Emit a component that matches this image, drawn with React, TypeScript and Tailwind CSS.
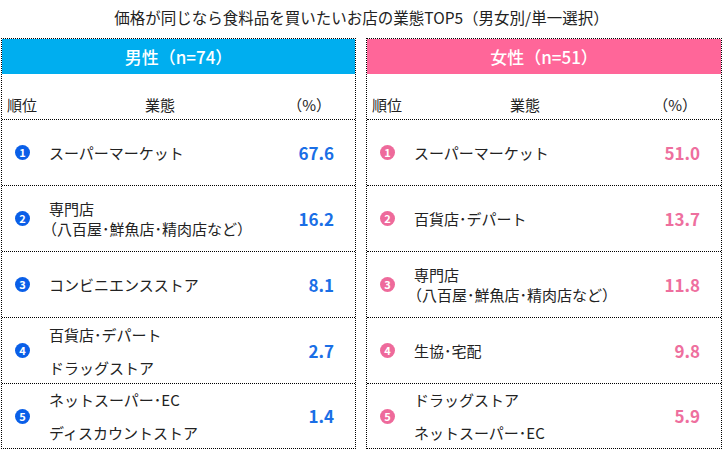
import React from "react";

type Item = { name: string[]; value: string; tight?: boolean };

const male: Item[] = [
  { name: ["スーパーマーケット"], value: "67.6" },
  { name: ["専門店", "（八百屋･鮮魚店･精肉店など）"], value: "16.2", tight: true },
  { name: ["コンビニエンスストア"], value: "8.1" },
  { name: ["百貨店･デパート", "ドラッグストア"], value: "2.7" },
  { name: ["ネットスーパー･EC", "ディスカウントストア"], value: "1.4" },
];

const female: Item[] = [
  { name: ["スーパーマーケット"], value: "51.0" },
  { name: ["百貨店･デパート"], value: "13.7" },
  { name: ["専門店", "（八百屋･鮮魚店･精肉店など）"], value: "11.8", tight: true },
  { name: ["生協･宅配"], value: "9.8" },
  { name: ["ドラッグストア", "ネットスーパー･EC"], value: "5.9" },
];

function Panel({
  title,
  items,
  male,
}: {
  title: string;
  items: Item[];
  male: boolean;
}) {
  return (
    <div className="flex flex-col border border-dotted border-black">
      <div
        className={
          "h-[35px] flex items-center justify-center text-white text-[17px] font-medium " +
          (male ? "bg-[#00aeef]" : "bg-[#ff6699]")
        }
      >
        {title}
      </div>
      <div className="h-[46px] flex items-end pb-[3px] border-b border-dotted border-black text-[15px] text-[#222]">
        <span className="pl-[5px] w-[143px]">順位</span>
        <span>業態</span>
        <span className="flex-1" />
        <span className="pr-[24px]">（%）</span>
      </div>
      {items.map((it, i) => (
        <div
          key={i}
          className={
            "flex items-center " +
            (i < 4 ? "h-[66px] border-b border-dotted border-black" : "h-[64px]")
          }
        >
          <div className="pl-[13px] w-[47px] flex items-center">
            <span
              className={
                "w-[15px] h-[15px] rounded-full flex items-center justify-center text-white text-[11px] font-bold leading-none " +
                (male ? "bg-[#0a5fe8]" : "bg-[#ee6a9b]")
              }
            >
              {i + 1}
            </span>
          </div>
          <div
            className={
              "flex-1 flex flex-col text-[15px] text-[#222] " +
              (it.name.length > 1 ? (it.tight ? "leading-[20px]" : "leading-[33px]") : "leading-[20px]")
            }
          >
            {it.name.map((n, j) => (
              <span key={j} className={it.tight && j === 1 ? "-ml-[7px]" : ""}>
                {n}
              </span>
            ))}
          </div>
          <div
            className={
              "pr-[21px] text-[17px] font-bold " +
              (male ? "text-[#1a6fe6]" : "text-[#ee6f9e]")
            }
          >
            {it.value}
          </div>
        </div>
      ))}
    </div>
  );
}

export default function App() {
  return (
    <div
      className="w-[723px] h-[451px] bg-white overflow-hidden"
      style={{ fontFamily: '"Noto Sans CJK JP", "Noto Sans", sans-serif' }}
    >
      <div className="h-[38px] flex items-center justify-center text-[15.5px] text-[#222] pb-[2px]">
        価格が同じなら食料品を買いたいお店の業態TOP5（男女別/単一選択）
      </div>
      <div className="flex pl-[1px] gap-[10px]">
        <div className="w-[355px]">
          <Panel title="男性（n=74）" items={male} male={true} />
        </div>
        <div className="w-[356px]">
          <Panel title="女性（n=51）" items={female} male={false} />
        </div>
      </div>
    </div>
  );
}
